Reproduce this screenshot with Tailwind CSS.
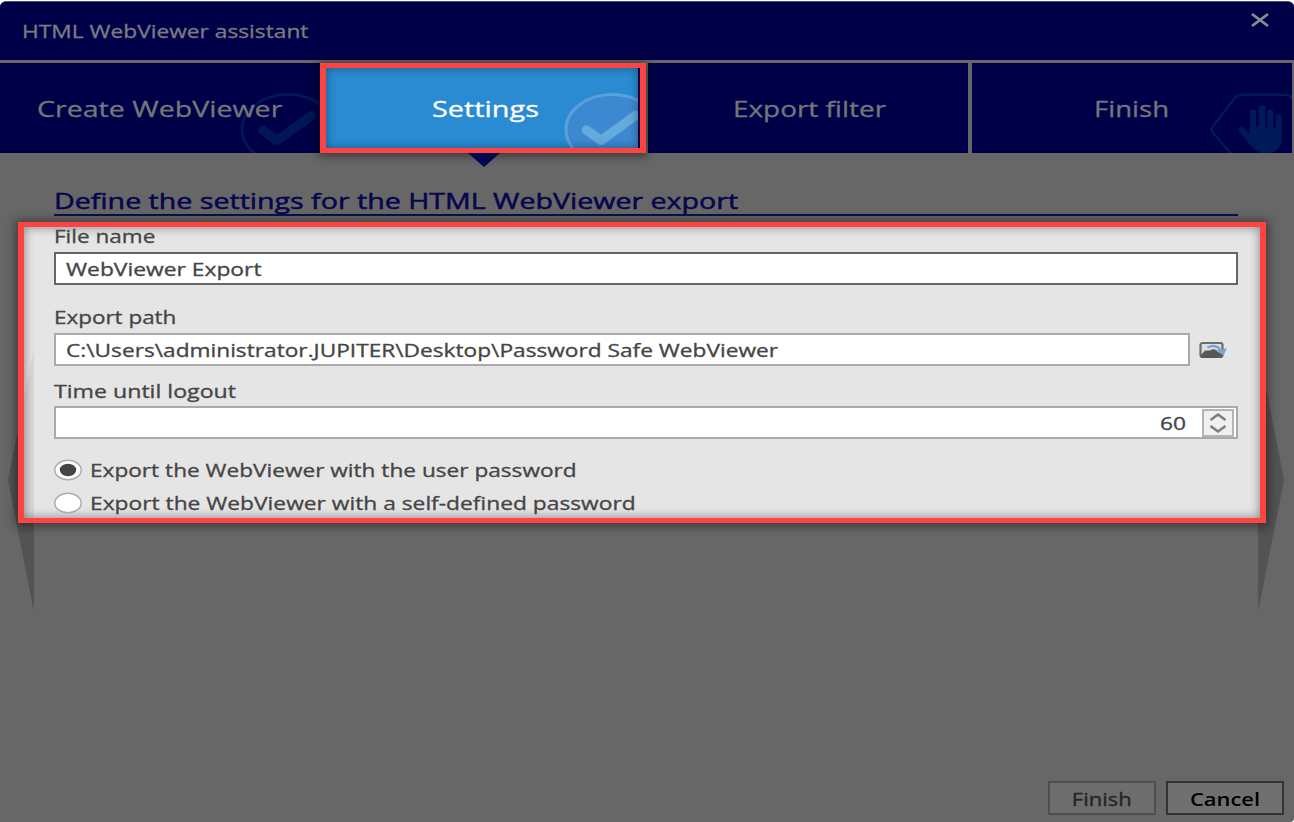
<!DOCTYPE html>
<html lang="en">
<head>
<meta charset="utf-8">
<title>HTML WebViewer assistant</title>
<script src="https://cdn.jsdelivr.net/npm/@tailwindcss/browser@4"></script>
</head>
<body class="bg-white font-['Open_Sans',sans-serif] whitespace-nowrap overflow-hidden [-webkit-text-stroke-width:0.3px]">
<div class="w-[1294px] h-[822px] pt-px">
<div class="h-[821px] flex flex-col bg-[#676767] rounded-t-[6px] rounded-br-[4px] overflow-hidden border-t border-[#4d4d78]">

  <header class="h-[58px] bg-[#000048] flex items-center justify-between pl-[22px] pr-6 shrink-0">
    <h1 class="text-[18px] leading-6 text-[#7b7b80] origin-left scale-x-[1.263]">HTML WebViewer assistant</h1>
    <svg class="w-5 h-4 -mt-[23px]" viewBox="0 0 20 16" fill="none" stroke="#8a9090" stroke-width="2.800"><path d="M2 2 18 14M18 2 2 14"/></svg>
  </header>

  <nav class="h-[90px] mt-[3px] flex shrink-0 text-[22.5px] leading-8 text-[#74777a]">
    <div class="relative w-[320px] bg-[#000048] flex items-center pl-[37px] pt-[2px] overflow-hidden">
      <svg class="absolute left-[236px] bottom-0 w-[84px] h-[63px]" viewBox="236 90 84 63" fill="none" stroke="#001657"><ellipse cx="288" cy="129.500" rx="46" ry="35" stroke-width="3"/><path d="M262.500 130 277 140.500 311.500 115.500" stroke-width="9" stroke-linecap="round" stroke-linejoin="round"/></svg>
      <span class="relative origin-left scale-x-[1.27]">Create WebViewer</span>
    </div>
    <div class="relative z-10 w-[326px] border-x-[6px] border-y-[5px] border-[#ff4343] flex shadow-[0_1px_9px_2px_rgba(0,0,0,0.45)]">
      <div class="relative w-[312px] bg-[#2a8bd3] flex items-center pl-[106px] pt-[2px] text-white overflow-hidden">
        <svg class="absolute left-[234px] bottom-0 w-[78px] h-[58px]" viewBox="560 90 78 58" fill="none" stroke="#65aadd"><ellipse cx="612" cy="129.500" rx="46" ry="35" stroke-width="3" stroke="#5aa0da" fill="#3d89d1"/><path d="M586.500 130 601 140.500 635.500 115.500" stroke-width="9.500" stroke-linecap="round" stroke-linejoin="round"/></svg>
        <span class="relative origin-left scale-x-[1.282]">Settings</span>
        <div class="absolute inset-0 shadow-[inset_0_0_9px_1px_rgba(0,0,0,0.32)]"></div>
      </div>
      <div class="grow bg-[#000048]"></div>
      <svg class="absolute left-[142px] top-[85px] w-8 h-[14px]" viewBox="0 0 32 14"><path d="M0 0H32L16 14Z" fill="#00084f"/></svg>
    </div>
    <div class="ml-[2px] w-[320px] bg-[#000048] flex items-center pl-[85px] pt-[2px]">
      <span class="origin-left scale-x-[1.24]">Export filter</span>
    </div>
    <div class="relative ml-1 w-[320px] bg-[#000048] flex items-center pl-[122px] pt-[2px] overflow-hidden">
      <span class="origin-left scale-x-[1.224]">Finish</span>
      <svg class="absolute right-0 bottom-0 w-[84px] h-[63px]" viewBox="1208 90 84 63" fill="none"><path d="M1232 155 1212.500 132Q1210.500 129.500 1212.500 127L1234 99Q1237 94.700 1243 94.700H1284Q1290 94.700 1293 99" stroke="#001a58" stroke-width="2.600"/><path d="M1238 130q1-4 5-2.500L1250 134V112a3 2.600 0 0 1 6 0V127h2.500V107.500a3.400 2.800 0 0 1 6.800 0V127h2V112a3 2.600 0 0 1 6 0V128h2.500V117a3 2.600 0 0 1 6 0V137q0 16-16 16-9 0-15-7Z" fill="#001a58"/></svg>
    </div>
  </nav>

  <main class="relative grow flex flex-col">
    <svg class="absolute left-[8px] top-[195px] w-[26px] h-[264px]" viewBox="0 0 26 264"><path d="M26 0V264L0 132Z" fill="#535353"/></svg>
    <svg class="absolute left-[1258px] top-[195px] w-[26px] h-[264px]" viewBox="0 0 26 264"><path d="M0 0V264L26 132Z" fill="#535353"/></svg>

    <h2 class="ml-[54px] mt-[31px] w-[1184px] h-8 border-b-2 border-[#0e0e50] text-[22.5px] leading-[33px] text-[#06064c] [-webkit-text-stroke-width:0.5px]"><span class="inline-block origin-left scale-x-[1.27]">Define the settings for the HTML WebViewer export</span></h2>

    <section class="relative ml-[18px] mt-[6px] w-[1248px] h-[301px] bg-[#e5e5e5] border-x-[6px] border-y-[5px] border-[#ff4343] shadow-[0_1px_9px_3px_rgba(0,0,0,0.4)] pl-[30px] pr-[22px] text-[17.5px] leading-[18px] text-[#454545]">
      <svg class="absolute left-0 top-[121px] w-[10px] h-[170px]" viewBox="24 348 10 170"><path d="M34 348V518H24V399Z" fill="#d9d9d9"/></svg>
      <div class="absolute inset-0 shadow-[inset_0_0_10px_1px_rgba(0,0,0,0.38)]"></div>
      <form class="relative flex flex-col">
        <label class="origin-left scale-x-[1.287] w-max">File name</label>
        <div class="mt-[7px] h-[33px] border-2 border-[#666] bg-white flex items-center pl-[10px] pt-px"><span class="origin-left scale-x-[1.304]">WebViewer Export</span></div>

        <label class="mt-[23px] origin-left scale-x-[1.282] w-max">Export path</label>
        <div class="mt-[7px] flex items-center">
          <div class="w-[1136px] h-[33px] border-2 border-[#aaa] bg-white flex items-center pl-[10px] pt-px"><span class="origin-left scale-x-[1.296]">C:\Users\administrator.JUPITER\Desktop\Password Safe WebViewer</span></div>
          <svg class="ml-[9px] w-[29px] h-[18px]" viewBox="0 0 29 18" fill="none"><rect x="1.500" y="2" width="22" height="14" rx="2" fill="#dedede" stroke="#6c6c6c" stroke-width="2.200"/><path d="M1.500 14.500 6 9.500H11Q13 7.500 16 8.500L25 12.500 23 16Q22 17 20 17H4Q2 17 1.500 14.500Z" fill="#585858"/><path d="M8.500 6.500Q17 2.500 22 10" stroke="#7aa3d4" stroke-width="2.400"/><path d="M17 10 28 7 24.500 14.500Z" fill="#7aa3d4"/></svg>
        </div>

        <label class="mt-4 origin-left scale-x-[1.322] w-max">Time until logout</label>
        <div class="mt-[6px] h-[33px] border-2 border-[#aaa] bg-white flex items-center justify-end pr-[2px]">
          <span class="origin-right scale-x-[1.3] mr-4 pt-px">60</span>
          <div class="w-8 h-7 border-2 border-[#b4b4b4] bg-[#f0f0f0] flex items-center justify-center">
            <svg class="w-[18px] h-[22px]" viewBox="0 0 18 22" fill="none" stroke="#7e7e7e" stroke-width="2.600"><path d="M1.500 8 9 2.500 16.500 8M1.500 14 9 19.500 16.500 14"/></svg>
          </div>
        </div>

        <div class="mt-[14px] h-[33px] flex items-center">
          <svg class="w-7 h-[22px]" viewBox="0 0 28 22"><ellipse cx="14" cy="11" rx="13.200" ry="9.800" fill="#fff" stroke="#adadad" stroke-width="1.500"/><ellipse cx="14" cy="11" rx="8.200" ry="6.200" fill="#444"/></svg>
          <span class="ml-[8px] pt-px origin-left scale-x-[1.293]">Export the WebViewer with the user password</span>
        </div>
        <div class="h-[33px] flex items-center">
          <svg class="w-7 h-[22px]" viewBox="0 0 28 22"><ellipse cx="14" cy="11" rx="13.200" ry="9.800" fill="#fff" stroke="#adadad" stroke-width="1.500"/></svg>
          <span class="ml-[8px] pt-px origin-left scale-x-[1.301]">Export the WebViewer with a self-defined password</span>
        </div>
      </form>
    </section>

    <footer class="mt-auto mb-[7px] mr-[10px] flex justify-end gap-[10px] text-[17.5px] leading-6">
      <div class="w-[108px] h-[34px] pt-px border-2 border-[#4f4f4f] bg-[#6d6d6d] text-[#242424] flex items-center justify-center"><span class="scale-x-[1.258]">Finish</span></div>
      <div class="w-[118px] h-[34px] pt-px border-2 border-[#333] bg-[#707070] text-black font-semibold flex items-center justify-center [-webkit-text-stroke-width:0]"><span class="scale-x-[1.25]">Cancel</span></div>
    </footer>
  </main>
</div>
</div>
</body>
</html>
